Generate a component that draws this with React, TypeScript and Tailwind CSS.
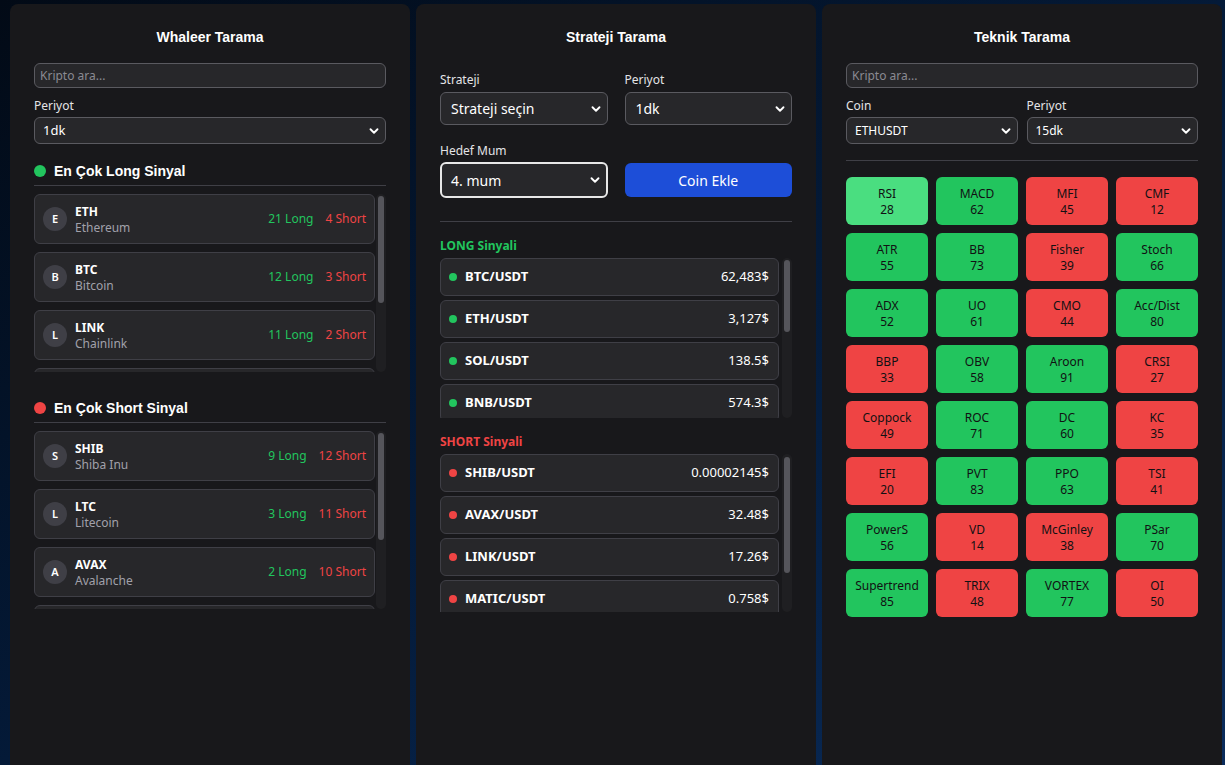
import { ChevronDown } from "lucide-react";

const body = { fontFamily: '"Noto Sans", "Open Sans", sans-serif' };
const head = { fontFamily: '"Liberation Sans", Arial, sans-serif' };

const longCoins = [
  { s: "ETH", n: "Ethereum", l: 21, sh: 4 },
  { s: "BTC", n: "Bitcoin", l: 12, sh: 3 },
  { s: "LINK", n: "Chainlink", l: 11, sh: 2 },
  { s: "SOL", n: "Solana", l: 9, sh: 2 },
];

const shortCoins = [
  { s: "SHIB", n: "Shiba Inu", l: 9, sh: 12 },
  { s: "LTC", n: "Litecoin", l: 3, sh: 11 },
  { s: "AVAX", n: "Avalanche", l: 2, sh: 10 },
  { s: "DOGE", n: "Dogecoin", l: 2, sh: 8 },
];

const longPairs = [
  ["BTC/USDT", "62,483$"],
  ["ETH/USDT", "3,127$"],
  ["SOL/USDT", "138.5$"],
  ["BNB/USDT", "574.3$"],
];

const shortPairs = [
  ["SHIB/USDT", "0.00002145$"],
  ["AVAX/USDT", "32.48$"],
  ["LINK/USDT", "17.26$"],
  ["MATIC/USDT", "0.758$"],
];

// g = green, r = red, l = light green (hovered)
const indicators: [string, number, string][] = [
  ["RSI", 28, "l"], ["MACD", 62, "g"], ["MFI", 45, "r"], ["CMF", 12, "r"],
  ["ATR", 55, "g"], ["BB", 73, "g"], ["Fisher", 39, "r"], ["Stoch", 66, "g"],
  ["ADX", 52, "g"], ["UO", 61, "g"], ["CMO", 44, "r"], ["Acc/Dist", 80, "g"],
  ["BBP", 33, "r"], ["OBV", 58, "g"], ["Aroon", 91, "g"], ["CRSI", 27, "r"],
  ["Coppock", 49, "r"], ["ROC", 71, "g"], ["DC", 60, "g"], ["KC", 35, "r"],
  ["EFI", 20, "r"], ["PVT", 83, "g"], ["PPO", 63, "g"], ["TSI", 41, "r"],
  ["PowerS", 56, "g"], ["VD", 14, "r"], ["McGinley", 38, "r"], ["PSar", 70, "g"],
  ["Supertrend", 85, "g"], ["TRIX", 48, "r"], ["VORTEX", 77, "g"], ["OI", 50, "r"],
];

function Select({ value, className }: { value: string; className: string }) {
  return (
    <div className={`flex items-center justify-between rounded-md bg-[#27272a] text-white ${className}`}>
      <span>{value}</span>
      <ChevronDown size={14} strokeWidth={3.2} className="text-white" />
    </div>
  );
}

function Search() {
  return (
    <div className="flex h-[25px] items-center rounded-md border border-[#5a5a60] bg-[#27272a] px-[5px] text-[12px] text-[#8a8a92]">
      Kripto ara...
    </div>
  );
}

function Scrollbar({ top, size }: { top: number; size: number }) {
  return (
    <div className="flex w-[10px] flex-col rounded-md bg-[#1f1f22] px-[2px]">
      <div style={{ height: top }} />
      <div className="w-[6px] rounded-full bg-[#55555b]" style={{ height: size }} />
    </div>
  );
}

function CoinList({ items }: { items: typeof longCoins }) {
  return (
    <div className="mt-2 flex h-[178px] gap-px overflow-hidden">
      <div className="flex flex-1 flex-col gap-2 overflow-hidden">
        {items.map((c) => (
          <div
            key={c.s}
            className="flex h-[50px] shrink-0 items-center rounded-md border border-[#3f3f46] bg-[#27272a] px-2"
          >
            <div className="flex h-6 w-6 items-center justify-center rounded-full bg-[#3f3f46] text-[11px] font-semibold text-white">
              {c.s[0]}
            </div>
            <div className="ml-2 flex flex-col pt-px leading-4">
              <span className="text-[12px] font-bold text-white">{c.s}</span>
              <span className="text-[12px] text-[#a1a1aa]">{c.n}</span>
            </div>
            <div className="ml-auto flex gap-3 text-[12px]">
              <span className="text-[#22c55e]">{c.l} Long</span>
              <span className="text-[#ef4444]">{c.sh} Short</span>
            </div>
          </div>
        ))}
      </div>
      <Scrollbar top={2} size={107} />
    </div>
  );
}

function PairList({ items, dot, h, thumbTop, thumb }: { items: string[][]; dot: string; h: string; thumbTop: number; thumb: number }) {
  return (
    <div className={`flex gap-[3px] overflow-hidden ${h}`}>
      <div className="flex flex-1 flex-col gap-1 overflow-hidden">
        {items.map(([p, v]) => (
          <div
            key={p}
            className="flex h-[38px] shrink-0 items-center rounded-md border border-[#3f3f46] bg-[#27272a] pl-[8px] pr-[9px]"
          >
            <span className={`h-2 w-2 rounded-full ${dot}`} />
            <span className="ml-2 text-[13px] font-bold text-white">{p}</span>
            <span className="ml-auto text-[13px] text-white">{v}</span>
          </div>
        ))}
      </div>
      <Scrollbar top={thumbTop} size={thumb} />
    </div>
  );
}

function SectionHead({ dot, children, className }: { dot: string; children: string; className: string }) {
  return (
    <div className={`flex items-center gap-2 border-b border-[#3f3f46] pb-1 ${className}`}>
      <span className={`h-3 w-3 rounded-full ${dot}`} />
      <span className="text-[14px] font-bold leading-5 text-white" style={head}>
        {children}
      </span>
    </div>
  );
}

function Title({ children }: { children: string }) {
  return (
    <h2 className="text-center text-[14px] font-bold leading-5 text-white" style={head}>
      {children}
    </h2>
  );
}

export default function App() {
  return (
    <div
      className="flex h-[765px] w-[1225px] gap-[6px] overflow-hidden bg-gradient-to-br from-[#020a16] via-[#041a38] to-[#0a2c5c] pl-[10px] pt-1"
      style={body}
    >
      {/* Whaleer */}
      <div className="flex h-[800px] w-[400px] flex-col rounded-t-lg bg-[#18181b] px-6 pt-[23px]">
        <Title>Whaleer Tarama</Title>
        <div className="mt-4">
          <Search />
        </div>
        <label className="mt-[10px] text-[12px] leading-4 text-[#e4e4e7]">Periyot</label>
        <Select value="1dk" className="mt-[3px] h-[27px] border border-[#5a5a60] pl-2 pr-1 text-[13px]" />
        <SectionHead dot="bg-[#22c55e]" className="mt-[17px]">
          En Çok Long Sinyal
        </SectionHead>
        <CoinList items={longCoins} />
        <SectionHead dot="bg-[#ef4444]" className="mt-[26px]">
          En Çok Short Sinyal
        </SectionHead>
        <CoinList items={shortCoins} />
      </div>

      {/* Strateji */}
      <div className="flex h-[800px] w-[400px] flex-col rounded-t-lg bg-[#18181b] px-6 pt-[23px]">
        <Title>Strateji Tarama</Title>
        <div className="mt-[25px] grid grid-cols-2 gap-x-[17px]">
          <div className="flex flex-col">
            <label className="text-[12px] leading-4 text-[#e4e4e7]">Strateji</label>
            <Select value="Strateji seçin" className="mt-1 h-[33px] border border-[#5a5a60] pl-[10px] pr-1 text-[14px]" />
          </div>
          <div className="flex flex-col">
            <label className="text-[12px] leading-4 text-[#e4e4e7]">Periyot</label>
            <Select value="1dk" className="mt-1 h-[33px] border border-[#5a5a60] pl-[10px] pr-1 text-[14px]" />
          </div>
          <div className="mt-[18px] flex flex-col">
            <label className="text-[12px] leading-4 text-[#e4e4e7]">Hedef Mum</label>
            <Select value="4. mum" className="mt-[3px] h-[36px] border-2 border-[#e8e8e8] pl-[9px] pr-1 text-[14px]" />
          </div>
          <div className="mt-[18px] flex flex-col justify-end">
            <button className="mb-px h-[34px] rounded-md bg-[#1d4ed8] text-[14px] text-white">Coin Ekle</button>
          </div>
        </div>
        <div className="mt-[23px] border-t border-[#3f3f46]" />
        <div className="mt-4 text-[12px] font-bold leading-4 text-[#22c55e]">LONG Sinyali</div>
        <div className="mt-1">
          <PairList items={longPairs} dot="bg-[#22c55e]" h="h-[160px]" thumbTop={2} thumb={72} />
        </div>
        <div className="mt-4 text-[12px] font-bold leading-4 text-[#ef4444]">SHORT Sinyali</div>
        <div className="mt-1">
          <PairList items={shortPairs} dot="bg-[#ef4444]" h="h-[158px]" thumbTop={3} thumb={116} />
        </div>
      </div>

      {/* Teknik */}
      <div className="flex h-[800px] w-[400px] flex-col rounded-t-lg bg-[#18181b] px-6 pt-[23px]">
        <Title>Teknik Tarama</Title>
        <div className="mt-4">
          <Search />
        </div>
        <div className="mt-[10px] grid grid-cols-2 gap-x-[9px]">
          <div className="flex flex-col">
            <label className="text-[12px] leading-4 text-[#e4e4e7]">Coin</label>
            <Select value="ETHUSDT" className="mt-[3px] h-[27px] border border-[#5a5a60] pl-2 pr-1 text-[12px]" />
          </div>
          <div className="flex flex-col">
            <label className="text-[12px] leading-4 text-[#e4e4e7]">Periyot</label>
            <Select value="15dk" className="mt-[3px] h-[27px] border border-[#5a5a60] pl-2 pr-1 text-[12px]" />
          </div>
        </div>
        <div className="mt-[16px] border-t border-[#3f3f46]" />
        <div className="mt-4 grid grid-cols-4 gap-2">
          {indicators.map(([name, v, c]) => (
            <div
              key={name}
              className={`flex h-12 flex-col items-center justify-center rounded-md pt-px text-[12px] leading-4 text-[#111113] ${
                c === "l" ? "bg-[#4ade80]" : c === "g" ? "bg-[#22c55e]" : "bg-[#ef4444]"
              }`}
            >
              <span>{name}</span>
              <span>{v}</span>
            </div>
          ))}
        </div>
      </div>
    </div>
  );
}
